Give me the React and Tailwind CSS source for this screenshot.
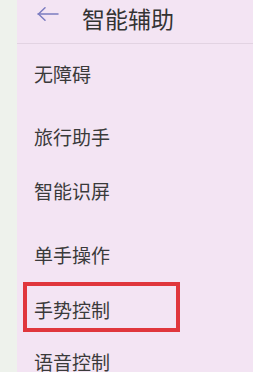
import React from "react";

const font = { fontFamily: '"Noto Sans CJK SC", "Noto Sans", sans-serif' };

function Row({ label, mt }) {
  return (
    <div className={`pl-[17px] text-[19px] leading-[20px] text-[#3a3a3a] ${mt}`}>{label}</div>
  );
}

export default function App() {
  return (
    <div className="w-[253px] h-[372px] overflow-hidden flex bg-[#f3e4f3]" style={font}>
      <div className="w-[17px] h-full bg-[#eef2ec]" />
      <div className="flex-1 flex flex-col">
        <div className="h-[44px] flex items-start border-b border-[#e2d3e2]">
          <svg className="ml-[20px] mt-[7px]" width="22" height="14" viewBox="0 0 22 14" fill="none" stroke="#7b7cc0" strokeWidth="1.5" strokeLinecap="round" strokeLinejoin="round">
            <path d="M1 7H21" />
            <path d="M8 0.8L1.5 7L8 13.2" />
          </svg>
          <div className="ml-[23px] mt-[6px] text-[23px] leading-[24px] text-[#333]">智能辅助</div>
        </div>
        <Row label="无障碍" mt="mt-[20px]" />
        <Row label="旅行助手" mt="mt-[43px]" />
        <Row label="智能识屏" mt="mt-[34px]" />
        <Row label="单手操作" mt="mt-[44px]" />
        <div className="mt-[17px] ml-[6px] w-[157px] h-[50px] border-4 border-[#e0363c] pt-[14px] pl-[7px] text-[19px] leading-[20px] text-[#3a3a3a]">
          手势控制
        </div>
        <Row label="语音控制" mt="mt-[20px]" />
      </div>
    </div>
  );
}
